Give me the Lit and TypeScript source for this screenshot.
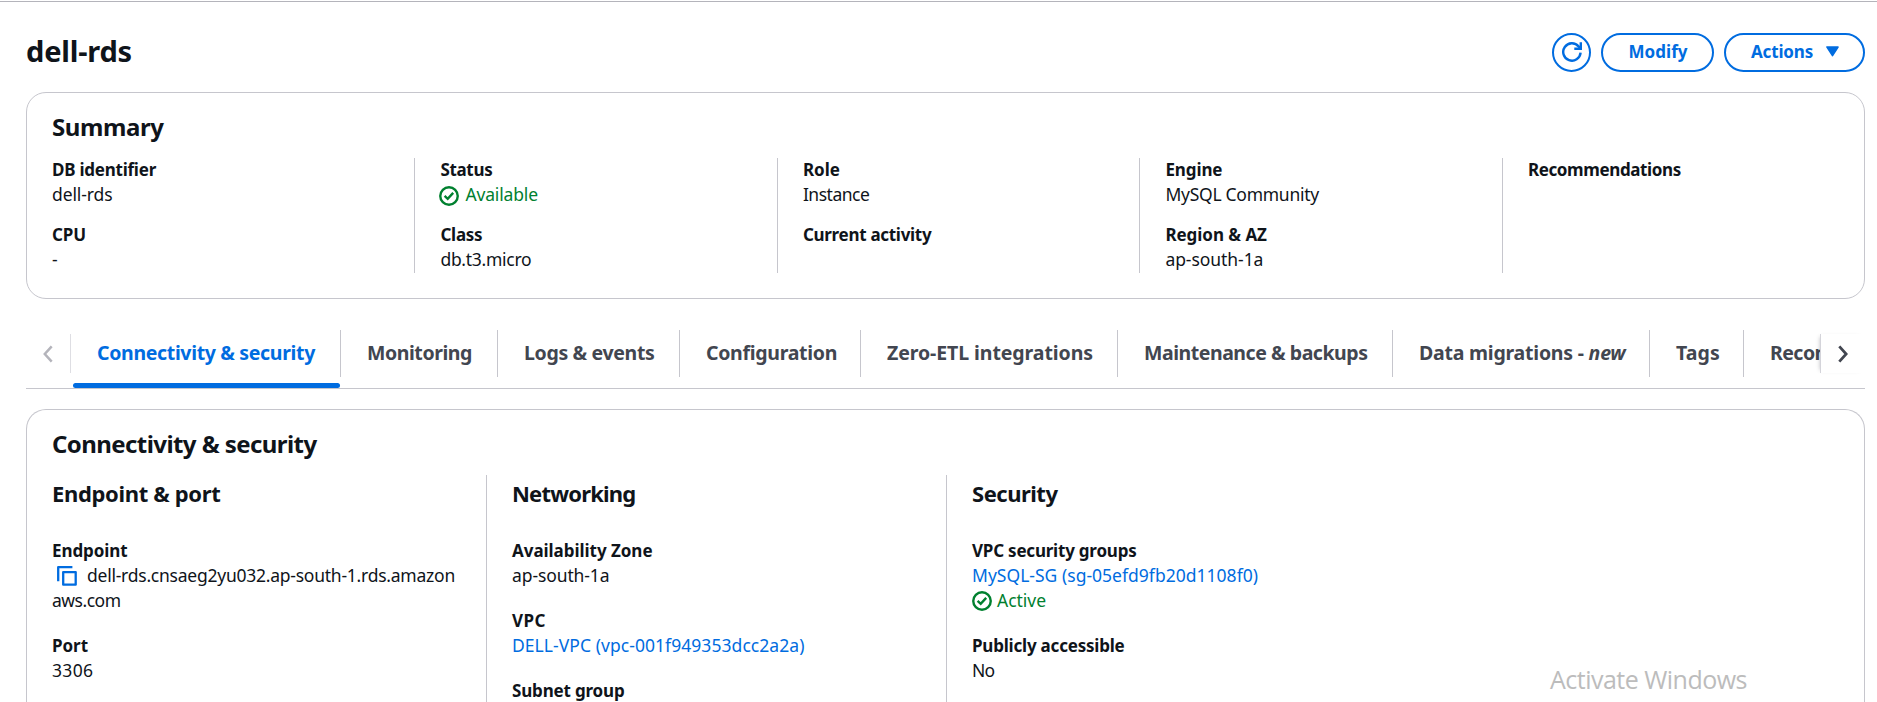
import { LitElement, html, css, svg, nothing, TemplateResult } from "lit";
import { customElement, property } from "lit/decorators.js";
import { classMap } from "lit/directives/class-map.js";

/** Text tracked so that its run takes the given width. */
@customElement("tracked-text")
class TrackedText extends LitElement {
  static styles = css`
    :host { display: inline-block; white-space: nowrap; }
    .em { font-style: italic; }
  `;
  @property() text = "";
  @property() em = "";
  @property({ type: Number }) w = 0;

  firstUpdated() {
    const count = this.text.length + this.em.length;
    const natural = this.getBoundingClientRect().width;
    if (this.w && count) this.style.letterSpacing = `${((this.w - natural) / count).toFixed(3)}px`;
  }
  render() {
    return html`${this.text}${this.em ? html`<span class="em">${this.em}</span>` : nothing}`;
  }
}

type Run = [string, number];
interface Field { label: Run; value?: Run[]; kind?: "ok" | "link" | "copy"; status?: Run; }
interface Column { heading?: Run; fields: Field[]; }

const t = (r: Run) => html`<tracked-text .text=${r[0]} .w=${r[1]}></tracked-text>`;

const okIcon = svg`<svg class="ok" viewBox="0 0 20 20" width="20" height="20" fill="none" stroke="currentColor">
  <circle cx="10" cy="10" r="8.75" stroke-width="2.4"/><path d="M5.6 9.9l3.1 2.9 5.5-5.9" stroke-width="2.4"/></svg>`;
const copyIcon = svg`<svg class="copy" viewBox="0 0 20 20" width="20" height="20" fill="none" stroke="currentColor" stroke-width="2.3" stroke-linejoin="round">
  <path d="M1.2 15.2V1.2H15.4"/><path d="M6.2 6.1H18.7V18.7H6.2Z"/></svg>`;
const refreshIcon = svg`<svg viewBox="0 0 20 20" width="20" height="20" fill="none" stroke="currentColor" stroke-width="2.4">
  <path d="M18.6 10.7A8.7 8.7 0 1 1 16.6 4.4L18.8 6.7"/><path d="M18.8 0.2V6.8H12.3"/></svg>`;

const SUMMARY: Column[] = [
  { fields: [{ label: ["DB identifier", 104], value: [["dell-rds", 60.5]] }, { label: ["CPU", 34], value: [["-", 6.5]] }] },
  { fields: [{ label: ["Status", 52], value: [["Available", 72.5]], kind: "ok" }, { label: ["Class", 42], value: [["db.t3.micro", 91]] }] },
  { fields: [{ label: ["Role", 37], value: [["Instance", 66.5]] }, { label: ["Current activity", 128.5] }] },
  { fields: [{ label: ["Engine", 57], value: [["MySQL Community", 153.5]] }, { label: ["Region & AZ", 101.5], value: [["ap-south-1a", 98]] }] },
  { fields: [{ label: ["Recommendations", 153] }] },
];

const DETAILS: Column[] = [
  { heading: ["Endpoint & port", 168.5], fields: [
    { label: ["Endpoint", 75.5], value: [["dell-rds.cnsaeg2yu032.ap-south-1.rds.amazon", 368], ["aws.com", 68.5]], kind: "copy" },
    { label: ["Port", 36], value: [["3306", 41.5]] } ] },
  { heading: ["Networking", 123.5], fields: [
    { label: ["Availability Zone", 140.5], value: [["ap-south-1a", 97.5]] },
    { label: ["VPC", 34], value: [["DELL-VPC (vpc-001f949353dcc2a2a)", 292.5]], kind: "link" },
    { label: ["Subnet group", 112.5] } ] },
  { heading: ["Security", 85.5], fields: [
    { label: ["VPC security groups", 164.5], value: [["MySQL-SG (sg-05efd9fb20d1108f0)", 286]], kind: "link", status: ["Active", 49] },
    { label: ["Publicly accessible", 152.5], value: [["No", 22.5]] } ] },
];

const TABS: { text: Run; em?: string; width: number }[] = [
  { text: ["Connectivity & security", 218], width: 268 },
  { text: ["Monitoring", 105], width: 157 },
  { text: ["Logs & events", 130.5], width: 182 },
  { text: ["Configuration", 131], width: 181 },
  { text: ["Zero-ETL integrations", 206], width: 257 },
  { text: ["Maintenance & backups", 223.5], width: 275 },
  { text: ["Data migrations - ", 206.5], em: "new", width: 257 },
  { text: ["Tags", 44], width: 94 },
  { text: ["Recommendations", 174], width: 226 },
];

@customElement("app-root")
class AppRoot extends LitElement {
  static styles = css`
    :host {
      display: block; position: relative; box-sizing: border-box; height: 702px; overflow: hidden;
      padding: 0 12px 0 26px; background: #fff; color: #0f141a;
      font: 400 17.5px/25px "Noto Sans", "Open Sans", sans-serif;
      border-top: 1px solid #fff;
    }
    * { box-sizing: border-box; }
    svg { display: block; flex: none; }
    .rule { height: 1px; margin: 0 -12px 0 -26px; background: #b4b4bb; }
    .top { display: flex; justify-content: space-between; margin-top: 31px; height: 39px; }
    h1, h2, h3 { margin: 0; font-weight: 700; }
    h1 { font-size: 29px; line-height: 35px; }
    h2 { font-size: 24px; line-height: 29px; height: 30px; }
    h3 { font-size: 22px; line-height: 28px; }
    .buttons { display: flex; gap: 10px; }
    button {
      height: 39px; border: 2px solid #006ce0; border-radius: 20px; background: #fff; color: #006ce0;
      font: 700 17px/25px "Noto Sans", "Open Sans", sans-serif; padding: 0 0 2px;
      display: flex; align-items: center; justify-content: center;
    }
    .round { width: 39px; padding: 0 0 1px 1px; }
    .modify { width: 113px; padding-left: 1px; }
    .actions { width: 141px; gap: 13px; padding-left: 1px; }
    .card { border: 1px solid #c6c6cd; border-radius: 20px; padding: 0 25px; }
    .summary { margin-top: 20px; height: 207px; padding-top: 19px; }
    .details { margin-top: 20px; height: 330px; padding-top: 19px; border-bottom: 0; border-radius: 20px 20px 0 0; }
    .cols { display: grid; margin-left: -26px; }
    .summary .cols { grid-template-columns: 388.4px repeat(4, 362.5px); margin-top: 16px; height: 115px; }
    .details .cols { grid-template-columns: repeat(3, 460px); margin-top: 16px; height: 260px; }
    .col { border-left: 1px solid #c6c6cd; padding-left: 25px; display: flex; flex-direction: column; }
    .col:first-child { border-color: transparent; }
    .summary .col { gap: 15px; }
    .details .col { gap: 20px; }
    h3 { margin: 4px 0 12px; }
    .field { display: flex; flex-direction: column; }
    .label { font-weight: 700; font-size: 17px; height: 25px; margin-top: -1px; margin-bottom: 1px; }
    .value { height: 25px; display: flex; margin-top: -1px; margin-bottom: 1px; }
    .green { color: #00802f; gap: 5px; }
    .green .ok { margin-top: 4px; }
    .summary .green { gap: 6px; }
    .summary .green .ok { margin-left: -1px; }
    .details .green .ok { margin-top: 3px; }
    .link { color: #006ce0; }
    .copy { color: #006ce0; margin: 3px 10px 0 5px; }
    .tabs { display: flex; align-items: flex-start; height: 60px; margin-top: 30px; border-bottom: 1px solid #c6c6cd; }
    .prev, .next { flex: none; display: flex; align-items: center; height: 39px; margin-top: 5px; }
    .prev { width: 45px; color: #b4b4bb; border-right: 1px solid #dedee3; padding-left: 17px; }
    .next { width: 45px; color: #424650; background: #fff; border-left: 1px solid #d4d4da; padding-left: 17px; box-shadow: -3px 0 4px -3px rgba(0, 7, 22, .25); z-index: 1; }
    .list { flex: 1; min-width: 0; overflow: hidden; display: flex; height: 59px; padding-left: 2px; }
    .tab {
      flex: none; height: 59px; font-size: 19.5px; font-weight: 700; color: #424650;
      display: flex; flex-direction: column; justify-content: space-between;
    }
    .name { height: 47px; border-right: 1px solid #c6c6cd; padding: 10px 0 0 24px; line-height: 25px; margin-top: 1px; }
    .tab + .tab .name { padding-left: 26px; }
    .bar { height: 5px; border-radius: 2.5px; margin-right: 1px; }
    .active { color: #006ce0; }
    .active .bar { background: #006ce0; }
    .watermark { position: absolute; left: 1550px; top: 661px; font-size: 25px; line-height: 34px; color: #bcbcbc; font-family: "Open Sans", sans-serif; font-weight: 400; }
  `;

  private value(f: Field): TemplateResult | typeof nothing {
    if (!f.value) return nothing;
    return html`${f.value.map((v, i) => html`<div class=${classMap({ value: true, green: f.kind === "ok", link: f.kind === "link" })}>
      ${f.kind === "ok" ? okIcon : nothing}${f.kind === "copy" && i === 0 ? copyIcon : nothing}${t(v)}</div>`)}
      ${f.status ? html`<div class="value green">${okIcon}${t(f.status)}</div>` : nothing}`;
  }

  private columns(cols: Column[]) {
    return html`<div class="cols">${cols.map((c) => html`<div class="col">
      ${c.heading ? html`<h3>${t(c.heading)}</h3>` : nothing}
      ${c.fields.map((f) => html`<div class="field"><div class="label">${t(f.label)}</div>${this.value(f)}</div>`)}
    </div>`)}</div>`;
  }

  render() {
    return html`
      <div class="rule"></div>
      <header class="top">
        <h1>${t(["dell-rds", 106])}</h1>
        <div class="buttons">
          <button class="round" aria-label="Refresh">${refreshIcon}</button>
          <button class="modify">${t(["Modify", 59])}</button>
          <button class="actions">${t(["Actions", 62])}
            <svg viewBox="0 0 13 11" width="13" height="11"><path d="M1 1H12L6.5 9.6Z" fill="currentColor" stroke="currentColor" stroke-width="1.6" stroke-linejoin="round"/></svg>
          </button>
        </div>
      </header>
      <section class="card summary"><h2>${t(["Summary", 111.5])}</h2>${this.columns(SUMMARY)}</section>
      <nav class="tabs">
        <div class="prev"><svg viewBox="0 0 10 18" width="10" height="18" fill="none" stroke="currentColor" stroke-width="2.5"><path d="M8.7 1.4L1.8 9L8.7 16.6"/></svg></div>
        <div class="list">${TABS.map((tab, i) => html`<div class=${classMap({ tab: true, active: i === 0 })} style="width:${tab.width}px">
          <div class="name"><tracked-text .text=${tab.text[0]} .em=${tab.em ?? ""} .w=${tab.text[1]}></tracked-text></div>
          <div class="bar"></div></div>`)}</div>
        <div class="next"><svg viewBox="0 0 10 18" width="10" height="18" fill="none" stroke="currentColor" stroke-width="2.8"><path d="M1.3 1.4L8.2 9L1.3 16.6"/></svg></div>
      </nav>
      <section class="card details"><h2>${t(["Connectivity & security", 264.5])}</h2>${this.columns(DETAILS)}</section>
      <div class="watermark">${t(["Activate Windows", 197])}</div>
    `;
  }
}
